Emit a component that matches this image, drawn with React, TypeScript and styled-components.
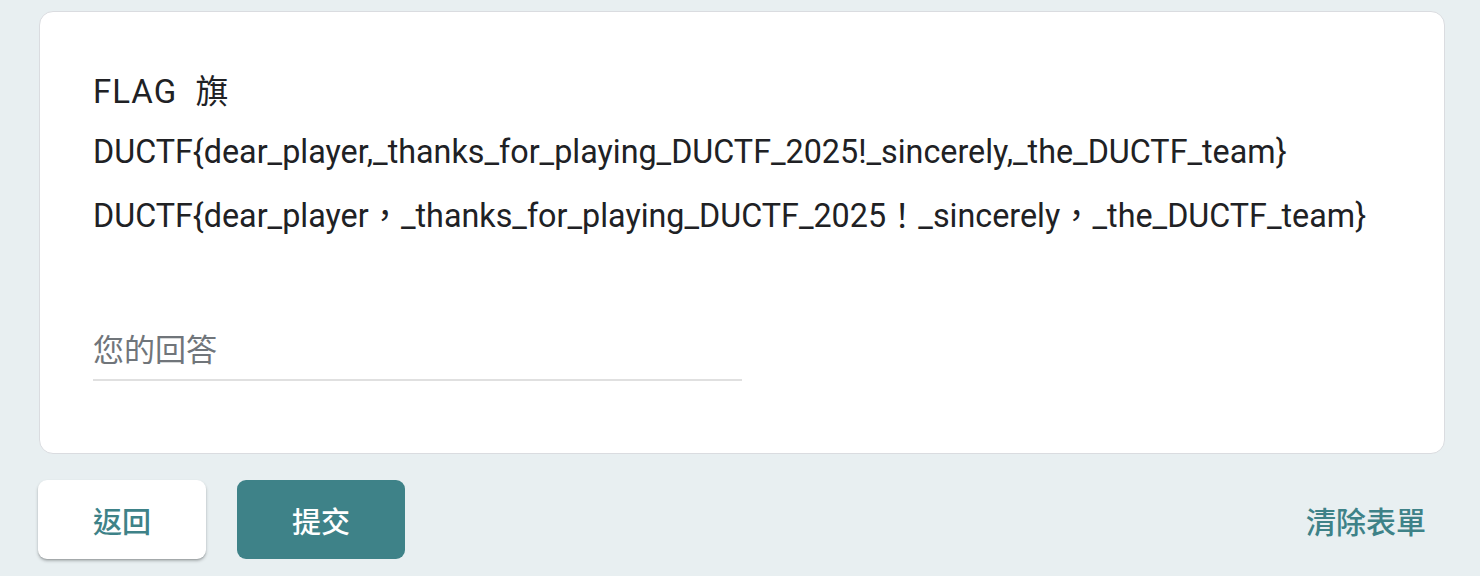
import React from "react";
import styled, { createGlobalStyle } from "styled-components";

const Global = createGlobalStyle`
  html, body { margin: 0; padding: 0; background: #e8eff1; }
  body { font-family: Roboto, "Noto Sans CJK TC", sans-serif; }
`;

const Page = styled.div`
  width: 1480px;
  height: 576px;
  box-sizing: border-box;
  padding: 11px 35px 0 39px;
  display: flex;
  flex-direction: column;
  overflow: hidden;
`;

const Card = styled.div`
  background: #ffffff;
  border: 1px solid #dadce0;
  border-radius: 14px;
  padding: 60px 53px 72px 53px;
  display: flex;
  flex-direction: column;
`;

const Title = styled.div`
  font-family: Roboto, "Noto Sans CJK TC", sans-serif;
  font-size: 33px;
  letter-spacing: 1px;
  line-height: 40px;
  color: #202124;
`;

const Line = styled.div<{ $gap: number }>`
  margin-top: ${(p) => p.$gap}px;
  font-family: Roboto, "Noto Sans CJK TC", sans-serif;
  font-size: 32.3px;
  line-height: 40px;
  color: #202124;
  white-space: nowrap;
`;

const Answer = styled.div`
  margin-top: 95px;
  width: 649px;
  height: 48px;
  border-bottom: 2px solid #e0e0e0;
  font-family: Roboto, "Noto Sans CJK TC", sans-serif;
  font-size: 31px;
  line-height: 40px;
  color: #70757a;
`;

const Footer = styled.div`
  margin-top: 26px;
  margin-left: -1px;
  display: flex;
  align-items: center;
  gap: 31px;
`;

const Button = styled.button<{ $primary?: boolean }>`
  width: 168px;
  height: 79px;
  border: none;
  border-radius: 9px;
  font-family: Roboto, "Noto Sans CJK TC", sans-serif;
  font-size: 29px;
  font-weight: 500;
  cursor: pointer;
  background: ${(p) => (p.$primary ? "#3e8288" : "#ffffff")};
  color: ${(p) => (p.$primary ? "#ffffff" : "#3e8288")};
  box-shadow: ${(p) =>
    p.$primary ? "none" : "0 2px 3px rgba(60,64,67,0.35), 0 1px 1px rgba(60,64,67,0.15)"};
`;

const Clear = styled.span`
  margin-left: auto;
  margin-right: 19px;
  font-family: Roboto, "Noto Sans CJK TC", sans-serif;
  font-size: 30px;
  font-weight: 500;
  color: #3e8288;
`;

export default function App() {
  return (
    <>
      <Global />
      <Page>
        <Card>
          <Title>FLAG&nbsp; 旗</Title>
          <Line $gap={20}>
            DUCTF{"{"}dear_player,_thanks_for_playing_DUCTF_2025!_sincerely,_the_DUCTF_team{"}"}
          </Line>
          <Line $gap={24}>
            DUCTF{"{"}dear_player，_thanks_for_playing_DUCTF_2025！_sincerely，_the_DUCTF_team{"}"}
          </Line>
          <Answer>您的回答</Answer>
        </Card>
        <Footer>
          <Button>返回</Button>
          <Button $primary>提交</Button>
          <Clear>清除表單</Clear>
        </Footer>
      </Page>
    </>
  );
}
